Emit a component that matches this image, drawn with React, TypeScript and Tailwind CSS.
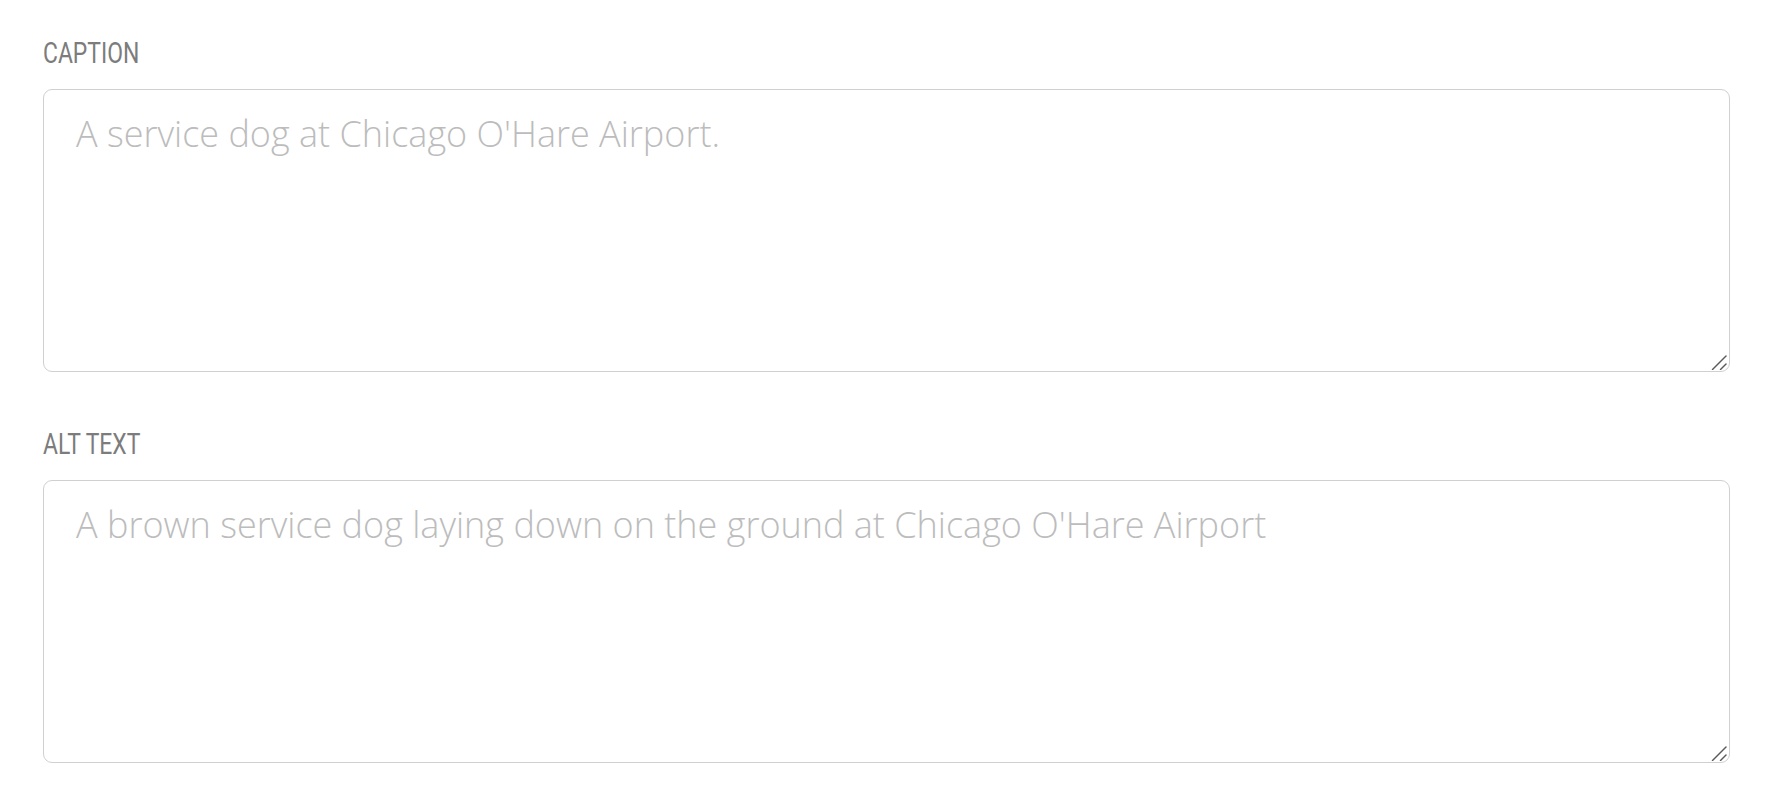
import { useState } from 'react';

interface FieldProps {
  label: string;
  placeholder: string;
}

// Mac-style resize grip drawn over the textarea's corner
function ResizeGrip() {
  return (
    <svg
      width="16"
      height="16"
      viewBox="0 0 16 16"
      className="pointer-events-none absolute bottom-[2px] right-[3px]"
    >
      <path d="M1.5 15.5 L15 2" stroke="#5a5a5a" strokeWidth="1.4" strokeLinecap="round" />
      <path d="M9.5 15.5 L15 10" stroke="#5a5a5a" strokeWidth="1.4" strokeLinecap="round" />
    </svg>
  );
}

function Field({ label, placeholder }: FieldProps) {
  const [value, setValue] = useState('');

  return (
    <div className="flex flex-col">
      <label
        className="origin-left scale-x-[0.79] whitespace-nowrap text-[29px] leading-[34px] uppercase text-[#7c7c7c]"
        style={{ fontFamily: 'Roboto, "Liberation Sans", sans-serif' }}
      >
        {label}
      </label>
      <div className="relative mt-[19px]">
        <textarea
          value={value}
          onChange={(e) => setValue(e.target.value)}
          placeholder={placeholder}
          className="block h-[283px] w-full resize-none rounded-[9px] border border-[#d0d0d0] bg-white px-[32px] pt-[18px] pb-[12px] text-[36px] leading-[52px] font-light text-[#444] placeholder:text-[#bcbcbc] outline-none"
          style={{ fontFamily: '"Open Sans", sans-serif' }}
        />
        <ResizeGrip />
      </div>
    </div>
  );
}

export default function App() {
  return (
    <div className="min-h-screen bg-white pl-[43px] pr-[42px] pt-[36px]">
      <div className="flex flex-col gap-[55px]">
        <Field label="Caption" placeholder="A service dog at Chicago O'Hare Airport." />
        <Field label="Alt Text" placeholder="A brown service dog laying down on the ground at Chicago O'Hare Airport" />
      </div>
    </div>
  );
}
